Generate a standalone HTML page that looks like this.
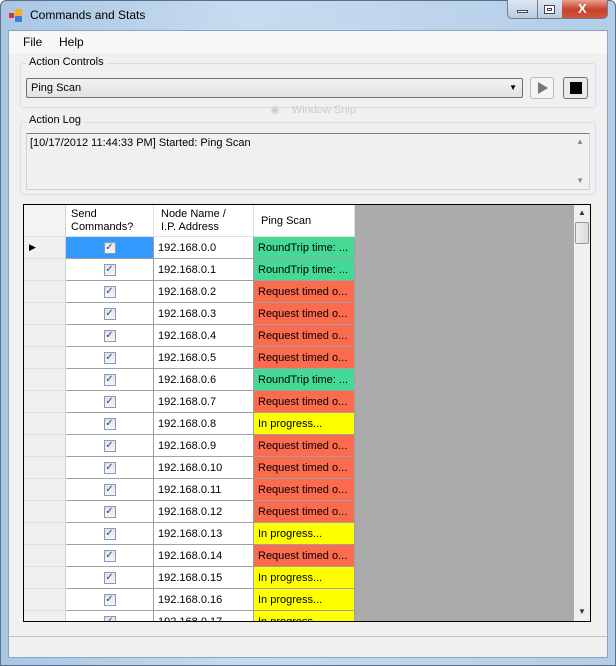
<!DOCTYPE html><html><head><style>
*{margin:0;padding:0;box-sizing:border-box}
body{width:616px;height:666px;overflow:hidden;font-family:"Liberation Sans",sans-serif;font-size:11px;background:#fff;position:relative}
.a{position:absolute}
.frame{left:0;top:0;width:616px;height:666px;background:linear-gradient(90deg,#a9c6e4,#c7dcf0 40%,#b3cde8);border:1px solid #5a6f88;border-radius:6px 6px 0 0}
.client{left:8px;top:30px;width:600px;height:628px;background:#f0f0f0;border:1px solid #8ea4bd}
.grp{border:1px solid #d5dfe5;border-radius:3px}
.lbl{background:#f0f0f0;padding:0 3px;font-size:11px}
table{border-collapse:collapse;table-layout:fixed}
td{height:22px;border:1px solid #a0a0a0;padding:0 4px;font-size:11px;white-space:nowrap;overflow:hidden}
td.rh{background:#f0f0f0;border-color:#e0e0e0 #d0d0d0}
td.cb{text-align:center}
.chk{display:inline-block;width:12px;height:12px;border:1px solid #8a9ab0;background:linear-gradient(#dde4ee,#f4f6f9);font-size:10px;line-height:10px;color:#3a4a6a;vertical-align:middle}
.G{background:#44da96}.R{background:#fb6b4e}.Y{background:#ffff00}
</style></head><body>
<div class="a frame"></div>
<div class="a" style="left:9px;top:9px;width:13px;height:13px">
<div class="a" style="left:0;top:4px;width:5px;height:5px;background:#d33"></div>
<div class="a" style="left:6px;top:0;width:7px;height:7px;background:#f0b020"></div>
<div class="a" style="left:6px;top:7px;width:7px;height:6px;background:#3b7fd8"></div></div>
<div class="a" style="left:30px;top:8px;font-size:12px;color:#000">Commands and Stats</div>
<div class="a" style="left:507px;top:0;width:101px;height:19px;border:1px solid #6d7f96;border-top:none;border-radius:0 0 5px 5px;background:linear-gradient(#dfe8f3,#b9cbe0);overflow:hidden">
<div class="a" style="left:29px;top:0;width:1px;height:19px;background:#6d7f96"></div>
<div class="a" style="left:54px;top:0;width:46px;height:19px;background:linear-gradient(#e8a090,#c7432b 50%,#d0583c)"></div>
<div class="a" style="left:9px;top:10px;width:11px;height:3px;background:#fff;border:1px solid #445"></div>
<div class="a" style="left:36px;top:5px;width:11px;height:9px;border:1px solid #445;background:#fff"><div style="margin:2px;height:3px;border:1px solid #445"></div></div>
<div class="a" style="left:70px;top:1px;color:#fff;font-weight:bold;font-size:13px">X</div></div>
<div class="a client"></div>
<div class="a" style="left:9px;top:31px;width:598px;height:22px;background:#f7f7f7"></div>
<div class="a" style="left:23px;top:35px;font-size:12px">File</div><div class="a" style="left:59px;top:35px;font-size:12px">Help</div>
<div class="a grp" style="left:20px;top:63px;width:576px;height:45px"></div>
<div class="a lbl" style="left:26px;top:56px">Action Controls</div>
<div class="a" style="left:26px;top:78px;width:497px;height:20px;border:1px solid #707070;border-radius:2px;background:linear-gradient(#f2f2f2,#e2e2e2);padding:3px 4px">Ping Scan<span class="a" style="right:5px;top:4px;font-size:8px">▼</span></div>
<div class="a" style="left:530px;top:77px;width:24px;height:22px;border:1px solid #bbb;border-radius:3px;background:#f4f4f4"><div class="a" style="left:7px;top:4px;border-left:10px solid #777;border-top:6px solid transparent;border-bottom:6px solid transparent"></div></div>
<div class="a" style="left:563px;top:77px;width:25px;height:22px;border:1px solid #707070;border-radius:3px;background:#eaeaea"><div class="a" style="left:6px;top:4px;width:12px;height:12px;background:#000"></div></div>
<div class="a" style="left:270px;top:103px;color:#ccc">◉ &nbsp; &nbsp;Window Snip</div>
<div class="a grp" style="left:20px;top:122px;width:576px;height:73px"></div>
<div class="a lbl" style="left:26px;top:114px">Action Log</div>
<div class="a" style="left:26px;top:133px;width:564px;height:57px;border:1px solid #d0d0d0;border-top:1px solid #808080;background:#f0f0f0;padding:3px 3px">[10/17/2012 11:44:33 PM] Started: Ping Scan
<span class="a" style="right:5px;top:3px;color:#888;font-size:8px">▲</span><span class="a" style="right:5px;top:42px;color:#888;font-size:8px">▼</span></div>
<div class="a" style="left:23px;top:204px;width:568px;height:418px;border:1px solid #000;background:#ababab;overflow:hidden">
<table class="a" style="left:-1px;top:-1px;width:331px">
<colgroup><col style="width:42px"><col style="width:88px"><col style="width:100px"><col style="width:101px"></colgroup>
<tr style="height:32px"><td class="rh" style="height:32px;background:#f4f4f4"></td><td style="background:#fff;border-color:#e0e0e0;line-height:13px;padding-left:5px">Send<br>Commands?</td><td style="background:#fff;border-color:#e0e0e0;line-height:13px;padding-left:7px">Node Name /<br>I.P. Address</td><td style="background:#fff;border-color:#e0e0e0;padding-left:7px">Ping Scan</td></tr>
<tr><td class="rh" style="font-size:9px;padding-left:5px">▶</td><td class="cb" style="background:#3399ff"><span class="chk">✓</span></td><td style="background:#fff">192.168.0.0</td><td class="G">RoundTrip time: ...</td></tr>
<tr><td class="rh"></td><td class="cb" style="background:#fff"><span class="chk">✓</span></td><td style="background:#fff">192.168.0.1</td><td class="G">RoundTrip time: ...</td></tr>
<tr><td class="rh"></td><td class="cb" style="background:#fff"><span class="chk">✓</span></td><td style="background:#fff">192.168.0.2</td><td class="R">Request timed o...</td></tr>
<tr><td class="rh"></td><td class="cb" style="background:#fff"><span class="chk">✓</span></td><td style="background:#fff">192.168.0.3</td><td class="R">Request timed o...</td></tr>
<tr><td class="rh"></td><td class="cb" style="background:#fff"><span class="chk">✓</span></td><td style="background:#fff">192.168.0.4</td><td class="R">Request timed o...</td></tr>
<tr><td class="rh"></td><td class="cb" style="background:#fff"><span class="chk">✓</span></td><td style="background:#fff">192.168.0.5</td><td class="R">Request timed o...</td></tr>
<tr><td class="rh"></td><td class="cb" style="background:#fff"><span class="chk">✓</span></td><td style="background:#fff">192.168.0.6</td><td class="G">RoundTrip time: ...</td></tr>
<tr><td class="rh"></td><td class="cb" style="background:#fff"><span class="chk">✓</span></td><td style="background:#fff">192.168.0.7</td><td class="R">Request timed o...</td></tr>
<tr><td class="rh"></td><td class="cb" style="background:#fff"><span class="chk">✓</span></td><td style="background:#fff">192.168.0.8</td><td class="Y">In progress...</td></tr>
<tr><td class="rh"></td><td class="cb" style="background:#fff"><span class="chk">✓</span></td><td style="background:#fff">192.168.0.9</td><td class="R">Request timed o...</td></tr>
<tr><td class="rh"></td><td class="cb" style="background:#fff"><span class="chk">✓</span></td><td style="background:#fff">192.168.0.10</td><td class="R">Request timed o...</td></tr>
<tr><td class="rh"></td><td class="cb" style="background:#fff"><span class="chk">✓</span></td><td style="background:#fff">192.168.0.11</td><td class="R">Request timed o...</td></tr>
<tr><td class="rh"></td><td class="cb" style="background:#fff"><span class="chk">✓</span></td><td style="background:#fff">192.168.0.12</td><td class="R">Request timed o...</td></tr>
<tr><td class="rh"></td><td class="cb" style="background:#fff"><span class="chk">✓</span></td><td style="background:#fff">192.168.0.13</td><td class="Y">In progress...</td></tr>
<tr><td class="rh"></td><td class="cb" style="background:#fff"><span class="chk">✓</span></td><td style="background:#fff">192.168.0.14</td><td class="R">Request timed o...</td></tr>
<tr><td class="rh"></td><td class="cb" style="background:#fff"><span class="chk">✓</span></td><td style="background:#fff">192.168.0.15</td><td class="Y">In progress...</td></tr>
<tr><td class="rh"></td><td class="cb" style="background:#fff"><span class="chk">✓</span></td><td style="background:#fff">192.168.0.16</td><td class="Y">In progress...</td></tr>
<tr><td class="rh"></td><td class="cb" style="background:#fff"><span class="chk">✓</span></td><td style="background:#fff">192.168.0.17</td><td class="Y">In progress...</td></tr>
</table>
<div class="a" style="left:550px;top:0;width:17px;height:416px;background:#f0f0f0">
<div class="a" style="left:4px;top:3px;font-size:8px;color:#333">▲</div>
<div class="a" style="left:1px;top:17px;width:14px;height:22px;border:1px solid #999;border-radius:2px;background:linear-gradient(90deg,#eee,#dcdcdc)"></div>
<div class="a" style="left:4px;top:402px;font-size:8px;color:#333">▼</div></div>
</div>
<div class="a" style="left:9px;top:636px;width:598px;height:21px;border-top:1px solid #c0c0c0;background:#f0f0f0"></div>
</body></html>
